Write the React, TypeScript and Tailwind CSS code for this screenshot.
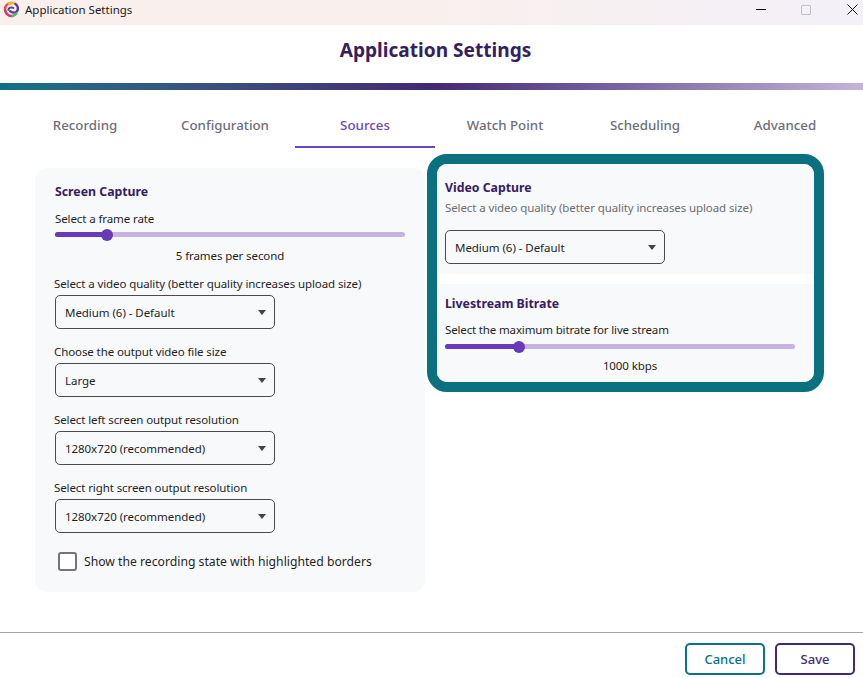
const font = { fontFamily: '"Noto Sans", "Open Sans", sans-serif' };

const tabs = ["Recording", "Configuration", "Sources", "Watch Point", "Scheduling", "Advanced"];

function Logo() {
  return (
    <svg width="17" height="17" viewBox="0 0 17 17" fill="none" className="shrink-0">
      <path d="M2 8.5C2 5 4.5 2.4 8 2" stroke="#e5503c" strokeWidth="2.6" strokeLinecap="round" />
      <path d="M6 2.6C8 1.6 10.5 1.8 12.4 3" stroke="#f2b632" strokeWidth="2.6" strokeLinecap="round" />
      <path d="M12.4 3C15 4.6 15.6 8 14 10.2C12.4 12.2 9.4 11.6 7.2 10.2" stroke="#5b3a9c" strokeWidth="2.4" strokeLinecap="round" />
      <path d="M5.4 8.8C5.8 6.6 8.4 5.8 10.4 7" stroke="#4a3f9f" strokeWidth="2" strokeLinecap="round" />
      <path d="M2.2 9.6C3 13 6 15.4 9.4 15" stroke="#d8366e" strokeWidth="2.6" strokeLinecap="round" />
      <path d="M9.4 15C11 14.8 12.6 13.8 13.4 12.4" stroke="#4fb96a" strokeWidth="2.4" strokeLinecap="round" />
    </svg>
  );
}

function Dropdown({ value }: { value: string }) {
  return (
    <div className="w-[220px] h-[34px] border border-[#4b4b4b] rounded-[5px] flex items-center justify-between pl-[9px] pr-[8px] text-[11.5px] tracking-[-0.05px] text-[#1f1f1f]">
      <span className="pt-px">{value}</span>
      <svg width="8" height="5" viewBox="0 0 8 5">
        <path d="M0 0H8L4 5Z" fill="#444" />
      </svg>
    </div>
  );
}

function Slider({ percent }: { percent: number }) {
  return (
    <div className="relative h-[5px] w-[350px] rounded-full bg-[#c5b3e6]">
      <div className="h-full rounded-full bg-[#673ab7]" style={{ width: `${percent}%` }} />
      <div
        className="absolute top-1/2 w-[12px] h-[12px] -translate-x-1/2 -translate-y-1/2 rounded-full bg-[#673ab7]"
        style={{ left: `${percent}%` }}
      />
    </div>
  );
}

function Field({ label, value }: { label: string; value: string }) {
  return (
    <div className="mt-[13px]">
      <p className="text-[11.5px] tracking-[-0.1px] leading-[17px] h-[21px] pt-px -ml-px text-[#1f1f1f]">{label}</p>
      <Dropdown value={value} />
    </div>
  );
}

export default function App() {
  return (
    <div className="w-[863px] h-[678px] overflow-hidden bg-white flex flex-col" style={font}>
      <div className="h-[25px] shrink-0 flex items-start pl-[3px] pt-[1px] bg-gradient-to-r from-[#f9f0ee] via-[#f9f0ee] to-[#f3f0f8]">
        <Logo />
        <span className="ml-[5px] text-[11.5px] leading-[17px] text-[#1a1a1a]">Application Settings</span>
        <div className="ml-auto flex items-center h-[17px]">
          <div className="w-[10px] h-px bg-black mr-[35px]" />
          <div className="w-[10px] h-[10px] border border-[#c4c4c4] rounded-[1px] mr-[36px]" />
          <svg width="11" height="11" viewBox="0 0 11 11" className="mr-[5px]">
            <path d="M0.5 0.5L10.5 10.5M10.5 0.5L0.5 10.5" stroke="#111" strokeWidth="1" />
          </svg>
        </div>
      </div>

      <div className="h-[58px] shrink-0 flex justify-center items-start pt-[11px] pl-[8px]">
        <h1 className="text-[19.1px] leading-[28px] font-bold text-[#35205f]">Application Settings</h1>
      </div>
      <div className="h-[7px] shrink-0 bg-gradient-to-r from-[#0b7285] via-[#432874] to-[#c4b5d8]" />

      <div className="flex shrink-0 pl-[15px] mt-[20px]">
        {tabs.map((t) => (
          <div
            key={t}
            className={
              t === "Sources"
                ? "w-[140px] h-[38px] flex items-start justify-center pt-[5px] text-[13.3px] leading-[20px] font-medium text-[#6b46c1] border-b-2 border-[#6b46c1]"
                : "w-[140px] h-[38px] flex items-start justify-center pt-[5px] text-[13.3px] leading-[20px] font-medium text-[#6e6e78]"
            }
          >
            {t}
          </div>
        ))}
      </div>

      <div className="flex items-start pl-[35px] mt-[20px] flex-1">
        <div className="w-[390px] h-[424px] shrink-0 rounded-[12px] bg-[#f8f9fb] pl-[20px] pt-[15px]">
          <h2 className="text-[12.3px] font-bold text-[#35205f] leading-[18px]">Screen Capture</h2>
          <p className="mt-[9px] text-[11.5px] tracking-[-0.1px] leading-[17px] text-[#1f1f1f]">Select a frame rate</p>
          <div className="mt-[5px]">
            <Slider percent={14.8} />
          </div>
          <p className="w-[350px] mt-[10px] text-center text-[11.5px] tracking-[-0.1px] leading-[17px] text-[#1f1f1f]">5 frames per second</p>
          <p className="mt-[10px] -ml-px text-[11.5px] tracking-[-0.1px] leading-[17px] h-[21px] pt-px text-[#1f1f1f]">Select a video quality (better quality increases upload size)</p>
          <Dropdown value="Medium (6) - Default" />
          <Field label="Choose the output video file size" value="Large" />
          <Field label="Select left screen output resolution" value="1280x720 (recommended)" />
          <Field label="Select right screen output resolution" value="1280x720 (recommended)" />
          <div className="mt-[19px] ml-[3px] flex items-center">
            <div className="w-[19px] h-[19px] rounded-[3px] border-2 border-[#757575] bg-white" />
            <span className="ml-[7px] pt-px text-[12.2px] text-[#1f1f1f]">Show the recording state with highlighted borders</span>
          </div>
        </div>

        <div className="ml-[2px] -mt-[14px] w-[397px] shrink-0 rounded-[20px] border-[10px] border-[#0b7080] overflow-hidden bg-white">
          <div className="h-[110px] bg-[#f8f9fb] pl-[8px] pt-[15px]">
            <h2 className="text-[12.3px] font-bold text-[#35205f] leading-[18px]">Video Capture</h2>
            <p className="mt-[2px] mb-[14px] text-[11.5px] tracking-[-0.1px] leading-[17px] text-[#6e6e6e]">Select a video quality (better quality increases upload size)</p>
            <Dropdown value="Medium (6) - Default" />
          </div>
          <div className="mt-[10px] h-[98px] bg-[#f8f9fb] pl-[8px] pt-[11px]">
            <h2 className="text-[12.3px] font-bold text-[#35205f] leading-[18px]">Livestream Bitrate</h2>
            <p className="mt-[8px] text-[11.5px] tracking-[-0.15px] leading-[17px] text-[#1f1f1f]">Select the maximum bitrate for live stream</p>
            <div className="mt-[6px]">
              <Slider percent={21} />
            </div>
            <p className="w-[370px] mt-[8px] text-center text-[11.5px] tracking-[-0.1px] leading-[17px] text-[#1f1f1f]">1000 kbps</p>
          </div>
        </div>
      </div>

      <div className="h-[46px] shrink-0 border-t border-[#a3a3a3] flex justify-end items-start pt-[10px] pr-[8px] gap-[10px]">
        <button className="w-[80px] h-[32px] pt-[2px] rounded-[5px] border-2 border-[#0b7285] text-[13px] font-medium text-[#0b7285]">Cancel</button>
        <button className="w-[80px] h-[32px] pt-[2px] rounded-[5px] border-2 border-[#432874] text-[13px] font-medium text-[#432874]">Save</button>
      </div>
    </div>
  );
}
